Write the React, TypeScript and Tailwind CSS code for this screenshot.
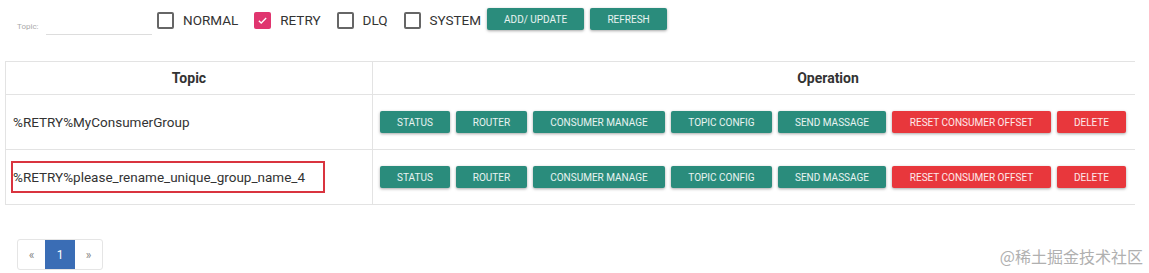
import React from 'react';

const teal = 'bg-[#2a8c7c]';
const red = 'bg-[#e8373c]';

function Btn({ label, danger, className = '' }: { label: string; danger?: boolean; className?: string }) {
  return (
    <button
      className={`h-[22px] rounded-[2px] text-[10px] text-white/90 uppercase shadow-[0_1px_3px_rgba(0,0,0,0.35)] ${danger ? red : teal} ${className}`}
    >
      {label}
    </button>
  );
}

function Check({ label, checked }: { label: string; checked?: boolean }) {
  return (
    <label className="flex items-center gap-[9px]">
      {checked ? (
        <span className="w-[17px] h-[17px] rounded-[2px] bg-[#e0356f] flex items-center justify-center">
          <svg width="11" height="11" viewBox="0 0 12 12" fill="none" stroke="white" strokeWidth="1.4">
            <path d="M2 6.2l2.6 2.6L10 3.2" />
          </svg>
        </span>
      ) : (
        <span className="w-[17px] h-[17px] rounded-[2px] border-2 border-[#666]" />
      )}
      <span className="text-[13.5px] text-[#333]">{label}</span>
    </label>
  );
}

const ops: { label: string; w: string; danger?: boolean }[] = [
  { label: 'STATUS', w: 'w-[70px]' },
  { label: 'ROUTER', w: 'w-[71px]' },
  { label: 'CONSUMER MANAGE', w: 'w-[132px]' },
  { label: 'TOPIC CONFIG', w: 'w-[101px]' },
  { label: 'SEND MASSAGE', w: 'w-[108px]' },
  { label: 'RESET CONSUMER OFFSET', w: 'w-[159px]', danger: true },
  { label: 'DELETE', w: 'w-[69px]', danger: true },
];

const rows = ['%RETRY%MyConsumerGroup', '%RETRY%please_rename_unique_group_name_4'];

export default function App() {
  return (
    <div className="relative w-[1149px] h-[273px] bg-white font-['Roboto',sans-serif] overflow-hidden">
      {/* Filter bar */}
      <div className="flex items-start h-[61px] pl-[17px]">
        <div className="flex items-end mt-[21px]">
          <span className="text-[8px] text-[#aaa] mb-[2px] w-[29px]">Topic:</span>
          <span className="w-[106px] border-b border-[#ddd] h-[14px]" />
        </div>
        <div className="flex items-center gap-[16px] ml-[5px] mt-[10px]">
          <Check label="NORMAL" />
          <Check label="RETRY" checked />
          <Check label="DLQ" />
          <Check label="SYSTEM" />
        </div>
        <div className="flex gap-[6px] ml-[6px] mt-[8px]">
          <Btn label="ADD/ UPDATE" className="w-[97px]" />
          <Btn label="REFRESH" className="w-[77px]" />
        </div>
      </div>

      {/* Table */}
      <table className="ml-[5px] w-[1130px] border-collapse text-[13.5px] text-[#333]">
        <thead>
          <tr className="h-[33px] text-[14px]">
            <th className="w-[367px] border border-[#e3e3e3] font-bold">Topic</th>
            <th className="border-y border-l border-[#e3e3e3] font-bold pl-[148px]">Operation</th>
          </tr>
        </thead>
        <tbody>
          {rows.map((r, i) => (
            <tr key={r} className="h-[55px]">
              <td className="border border-[#e3e3e3] pl-[7px]">
                {i === 1 ? (
                  <span className="inline-block -ml-[2px] pr-[18px] py-[6px] border-2 border-[#d9343f] leading-[16px]">
                    {r}
                  </span>
                ) : (
                  r
                )}
              </td>
              <td className="border-y border-l border-[#e3e3e3] pl-[7px]">
                <div className="flex gap-[6px]">
                  {ops.map(o => (
                    <Btn key={o.label} label={o.label} danger={o.danger} className={o.w} />
                  ))}
                </div>
              </td>
            </tr>
          ))}
        </tbody>
      </table>

      {/* Pagination */}
      <div className="flex ml-[17px] mt-[34px] h-[31px] rounded-[3px] border border-[#e5e5e5] w-fit overflow-hidden text-[12px]">
        <span className="w-[27px] flex items-center justify-center text-[#888]">«</span>
        <span className="w-[30px] flex items-center justify-center bg-[#3a6db5] text-white">1</span>
        <span className="w-[27px] flex items-center justify-center text-[#888]">»</span>
      </div>

      <span className="absolute right-[6px] bottom-[5px] text-[16px] text-[#b0b0b0] font-['Noto_Sans_CJK_SC',sans-serif]">
        @稀土掘金技术社区
      </span>
    </div>
  );
}
